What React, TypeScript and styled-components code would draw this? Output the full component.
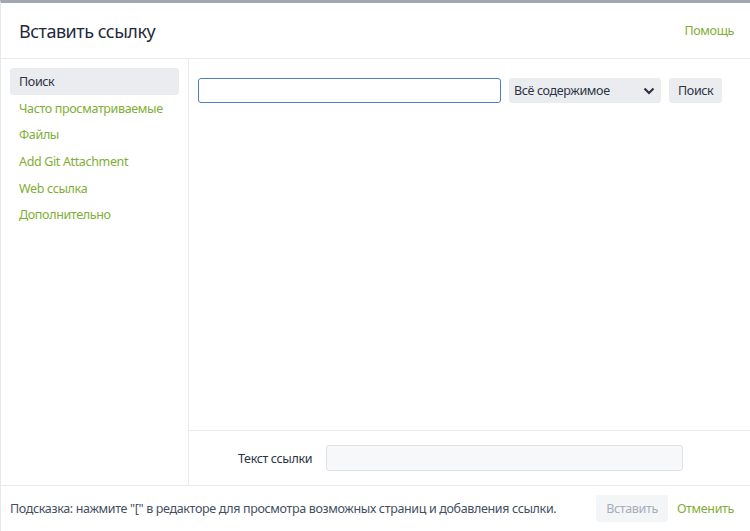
import React from "react";
import styled, { createGlobalStyle } from "styled-components";

const Global = createGlobalStyle`
  html, body { margin: 0; padding: 0; background: #fff; }
  body {
    font-family: "Noto Sans", "Open Sans", sans-serif;
    color: #172b4d;
    letter-spacing: -0.35px;
  }
  * { box-sizing: border-box; }
`;

const green = "#7fae36";

const Page = styled.div`
  width: 750px;
  height: 531px;
  display: flex;
  flex-direction: column;
  border-top: 3px solid #a2a6b3;
  border-left: 1px solid #e6e8eb;
  background: #fff;
  overflow: hidden;
`;

const Header = styled.header`
  height: 56px;
  flex: none;
  display: flex;
  align-items: center;
  justify-content: space-between;
  padding: 0 16px 0 18px;
  border-bottom: 1px solid #e8eaed;
`;

const Title = styled.h1`
  margin: 0;
  font-size: 18px;
  font-weight: 400;
  letter-spacing: -0.5px;
  color: #1f2a3c;
`;

const Link = styled.a`
  font-size: 12.5px;
  color: ${green};
  text-decoration: none;
`;

const Body = styled.div`
  flex: 1;
  display: flex;
  min-height: 0;
`;

const Sidebar = styled.nav`
  width: 188px;
  flex: none;
  border-right: 1px solid #e8eaed;
  padding: 9px 9px 0 9px;
  display: flex;
  flex-direction: column;
`;

const NavItem = styled.div<{ $active?: boolean }>`
  height: 26.7px;
  display: flex;
  align-items: center;
  padding-left: 9px;
  font-size: 12.5px;
  border-radius: 3px;
  color: ${(p) => (p.$active ? "#2b3445" : green)};
  background: ${(p) => (p.$active ? "#ebecf0" : "transparent")};
`;

const Main = styled.main`
  flex: 1;
  display: flex;
  flex-direction: column;
`;

const SearchArea = styled.div`
  flex: 1;
  padding: 19px 28px 0 9px;
  display: flex;
  align-items: flex-start;
  gap: 8px;
`;

const SearchInput = styled.input`
  width: 303px;
  height: 25px;
  border: 1px solid #4a7fc4;
  border-radius: 3px;
  outline: none;
  padding: 0 6px;
  font-family: inherit;
`;

const Select = styled.div`
  width: 152px;
  height: 25px;
  background: #ebecf0;
  border-radius: 3px;
  display: flex;
  align-items: center;
  justify-content: space-between;
  padding: 0 6px 0 5px;
  font-size: 12.5px;
  color: #2b3445;
`;

const Button = styled.button<{ $disabled?: boolean }>`
  height: 25px;
  border: none;
  border-radius: 3px;
  background: ${(p) => (p.$disabled ? "#f4f5f7" : "#ebecf0")};
  color: ${(p) => (p.$disabled ? "#a5adba" : "#2b3445")};
  font-family: inherit;
  letter-spacing: inherit;
  font-size: 12.5px;
  padding: 0 9px;
`;

const LinkRow = styled.div`
  height: 55px;
  flex: none;
  border-top: 1px solid #e8eaed;
  display: flex;
  align-items: center;
  padding-left: 49px;
  gap: 14px;
`;

const Label = styled.label`
  font-size: 12.5px;
  color: #2b3445;
`;

const TextInput = styled.input`
  width: 357px;
  height: 26px;
  border: 1px solid #dfe1e6;
  background: #f7f8f9;
  border-radius: 3px;
  outline: none;
`;

const Footer = styled.footer`
  height: 46px;
  flex: none;
  border-top: 1px solid #e8eaed;
  display: flex;
  align-items: center;
  padding: 0 16px 0 9px;
  gap: 9px;
`;

const Hint = styled.div`
  flex: 1;
  font-size: 12.5px;
  color: #44505f;
  white-space: nowrap;
`;

const FooterButton = styled(Button)`
  height: 27px;
  padding: 0 10px;
`;

export default function App() {
  return (
    <>
      <Global />
      <Page>
        <Header>
          <Title>Вставить ссылку</Title>
          <Link>Помощь</Link>
        </Header>
        <Body>
          <Sidebar>
            <NavItem $active>Поиск</NavItem>
            <NavItem>Часто просматриваемые</NavItem>
            <NavItem>Файлы</NavItem>
            <NavItem>Add Git Attachment</NavItem>
            <NavItem>Web ссылка</NavItem>
            <NavItem>Дополнительно</NavItem>
          </Sidebar>
          <Main>
            <SearchArea>
              <SearchInput />
              <Select>
                <span>Всё содержимое</span>
                <svg width="12" height="8" viewBox="0 0 12 8">
                  <path d="M1.5 1.5 L6 6 L10.5 1.5" fill="none" stroke="#2b3445" strokeWidth="2.2" />
                </svg>
              </Select>
              <Button>Поиск</Button>
            </SearchArea>
            <LinkRow>
              <Label>Текст ссылки</Label>
              <TextInput />
            </LinkRow>
          </Main>
        </Body>
        <Footer>
          <Hint>Подсказка: нажмите "[" в редакторе для просмотра возможных страниц и добавления ссылки.</Hint>
          <FooterButton $disabled>Вставить</FooterButton>
          <Link>Отменить</Link>
        </Footer>
      </Page>
    </>
  );
}
